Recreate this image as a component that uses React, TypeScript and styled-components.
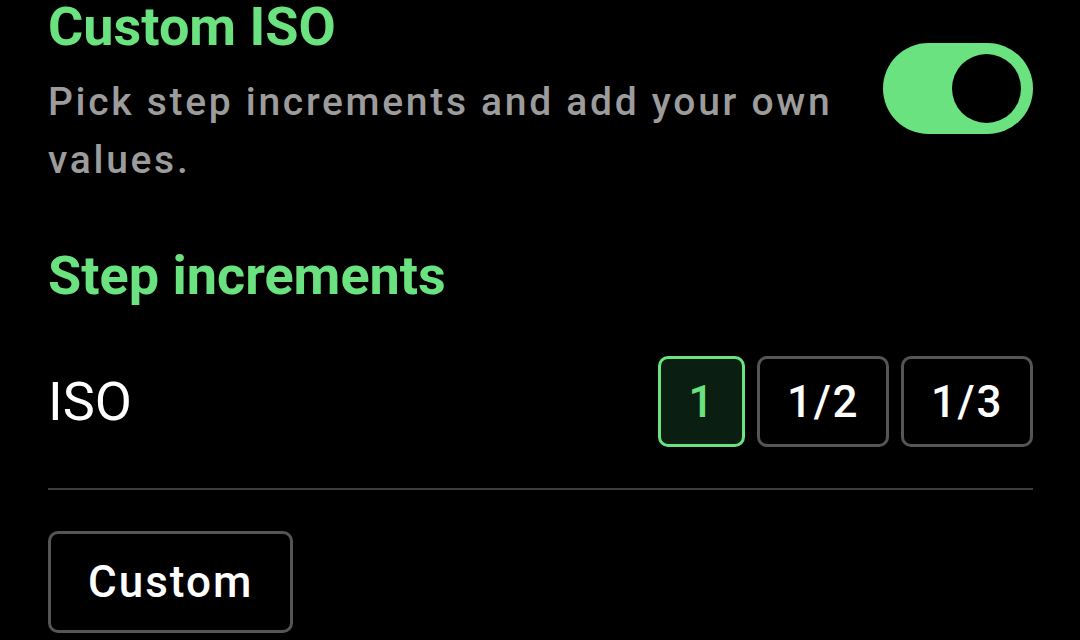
import React, { useState } from "react";
import styled, { createGlobalStyle } from "styled-components";

const GlobalStyle = createGlobalStyle`
  html, body {
    margin: 0;
    padding: 0;
    background: #000;
  }

  body {
    font-family: Roboto, "Noto Sans", "Liberation Sans", sans-serif;
    color: #fff;
    overflow: hidden;
  }
`;

const Page = styled.div`
  width: 1080px;
  height: 640px;
  box-sizing: border-box;
  padding: 0 47px 0 48px;
  background: #000;
`;

const Header = styled.div`
  display: flex;
  align-items: flex-start;
  gap: 40px;
`;

const HeaderText = styled.div`
  flex: 1;
`;

const Title = styled.h1`
  margin: 0;
  font-size: 54px;
  line-height: 54px;
  font-weight: 700;
  color: #6ae27f;
`;

const Description = styled.p`
  margin: 19px 0 0;
  font-size: 39px;
  line-height: 58px;
  font-weight: 500;
  letter-spacing: 2.7px;
  color: #9c9c9c;
`;

const Toggle = styled.button<{ on: boolean }>`
  flex: none;
  width: 150px;
  height: 91px;
  margin-top: 43px;
  padding: 0 12px;
  border: none;
  border-radius: 46px;
  background: ${(p) => (p.on ? "#6ae27f" : "#444")};
  display: flex;
  align-items: center;
  justify-content: ${(p) => (p.on ? "flex-end" : "flex-start")};
  cursor: pointer;
`;

const Thumb = styled.span`
  width: 69px;
  height: 69px;
  border-radius: 50%;
  background: #000;
`;

const SectionTitle = styled.h2`
  margin: 60px 0 0;
  font-size: 54px;
  line-height: 54px;
  font-weight: 700;
  color: #6ae27f;
`;

const Row = styled.div`
  display: flex;
  align-items: center;
  justify-content: space-between;
  margin-top: 53px;
`;

const RowLabel = styled.span`
  font-size: 54px;
  line-height: 54px;
  font-weight: 400;
  color: #fff;
`;

const Chips = styled.div`
  display: flex;
  gap: 12px;
`;

const Chip = styled.button<{ active: boolean }>`
  height: 91px;
  padding: 0 27px;
  box-sizing: border-box;
  border: 3px solid ${(p) => (p.active ? "#6ae27f" : "#555")};
  border-radius: 10px;
  background: ${(p) => (p.active ? "#0a1f11" : "#000")};
  color: ${(p) => (p.active ? "#6ae27f" : "#fff")};
  font-family: inherit;
  font-size: 44px;
  font-weight: 500;
  letter-spacing: 1.6px;
  cursor: pointer;
`;

const Divider = styled.hr`
  margin: 41px 0 0;
  border: none;
  height: 2px;
  background: #3d3d3d;
`;

const CustomButton = styled.button`
  margin-top: 41px;
  height: 102px;
  padding: 0 37px;
  box-sizing: border-box;
  border: 3px solid #555;
  border-radius: 10px;
  background: #000;
  color: #fff;
  font-family: inherit;
  font-size: 44px;
  font-weight: 500;
  letter-spacing: 2px;
  cursor: pointer;
`;

const steps = ["1", "1/2", "1/3"];

export default function App() {
  const [on, setOn] = useState(true);
  const [step, setStep] = useState("1");

  return (
    <>
      <GlobalStyle />
      <Page>
        <Header>
          <HeaderText>
            <Title>Custom ISO</Title>
            <Description>Pick step increments and add your own values.</Description>
          </HeaderText>
          <Toggle on={on} onClick={() => setOn(!on)} aria-label="Custom ISO">
            <Thumb />
          </Toggle>
        </Header>

        <SectionTitle>Step increments</SectionTitle>

        <Row>
          <RowLabel>ISO</RowLabel>
          <Chips>
            {steps.map((s) => (
              <Chip key={s} active={s === step} onClick={() => setStep(s)}>
                {s}
              </Chip>
            ))}
          </Chips>
        </Row>

        <Divider />

        <CustomButton>Custom</CustomButton>
      </Page>
    </>
  );
}
